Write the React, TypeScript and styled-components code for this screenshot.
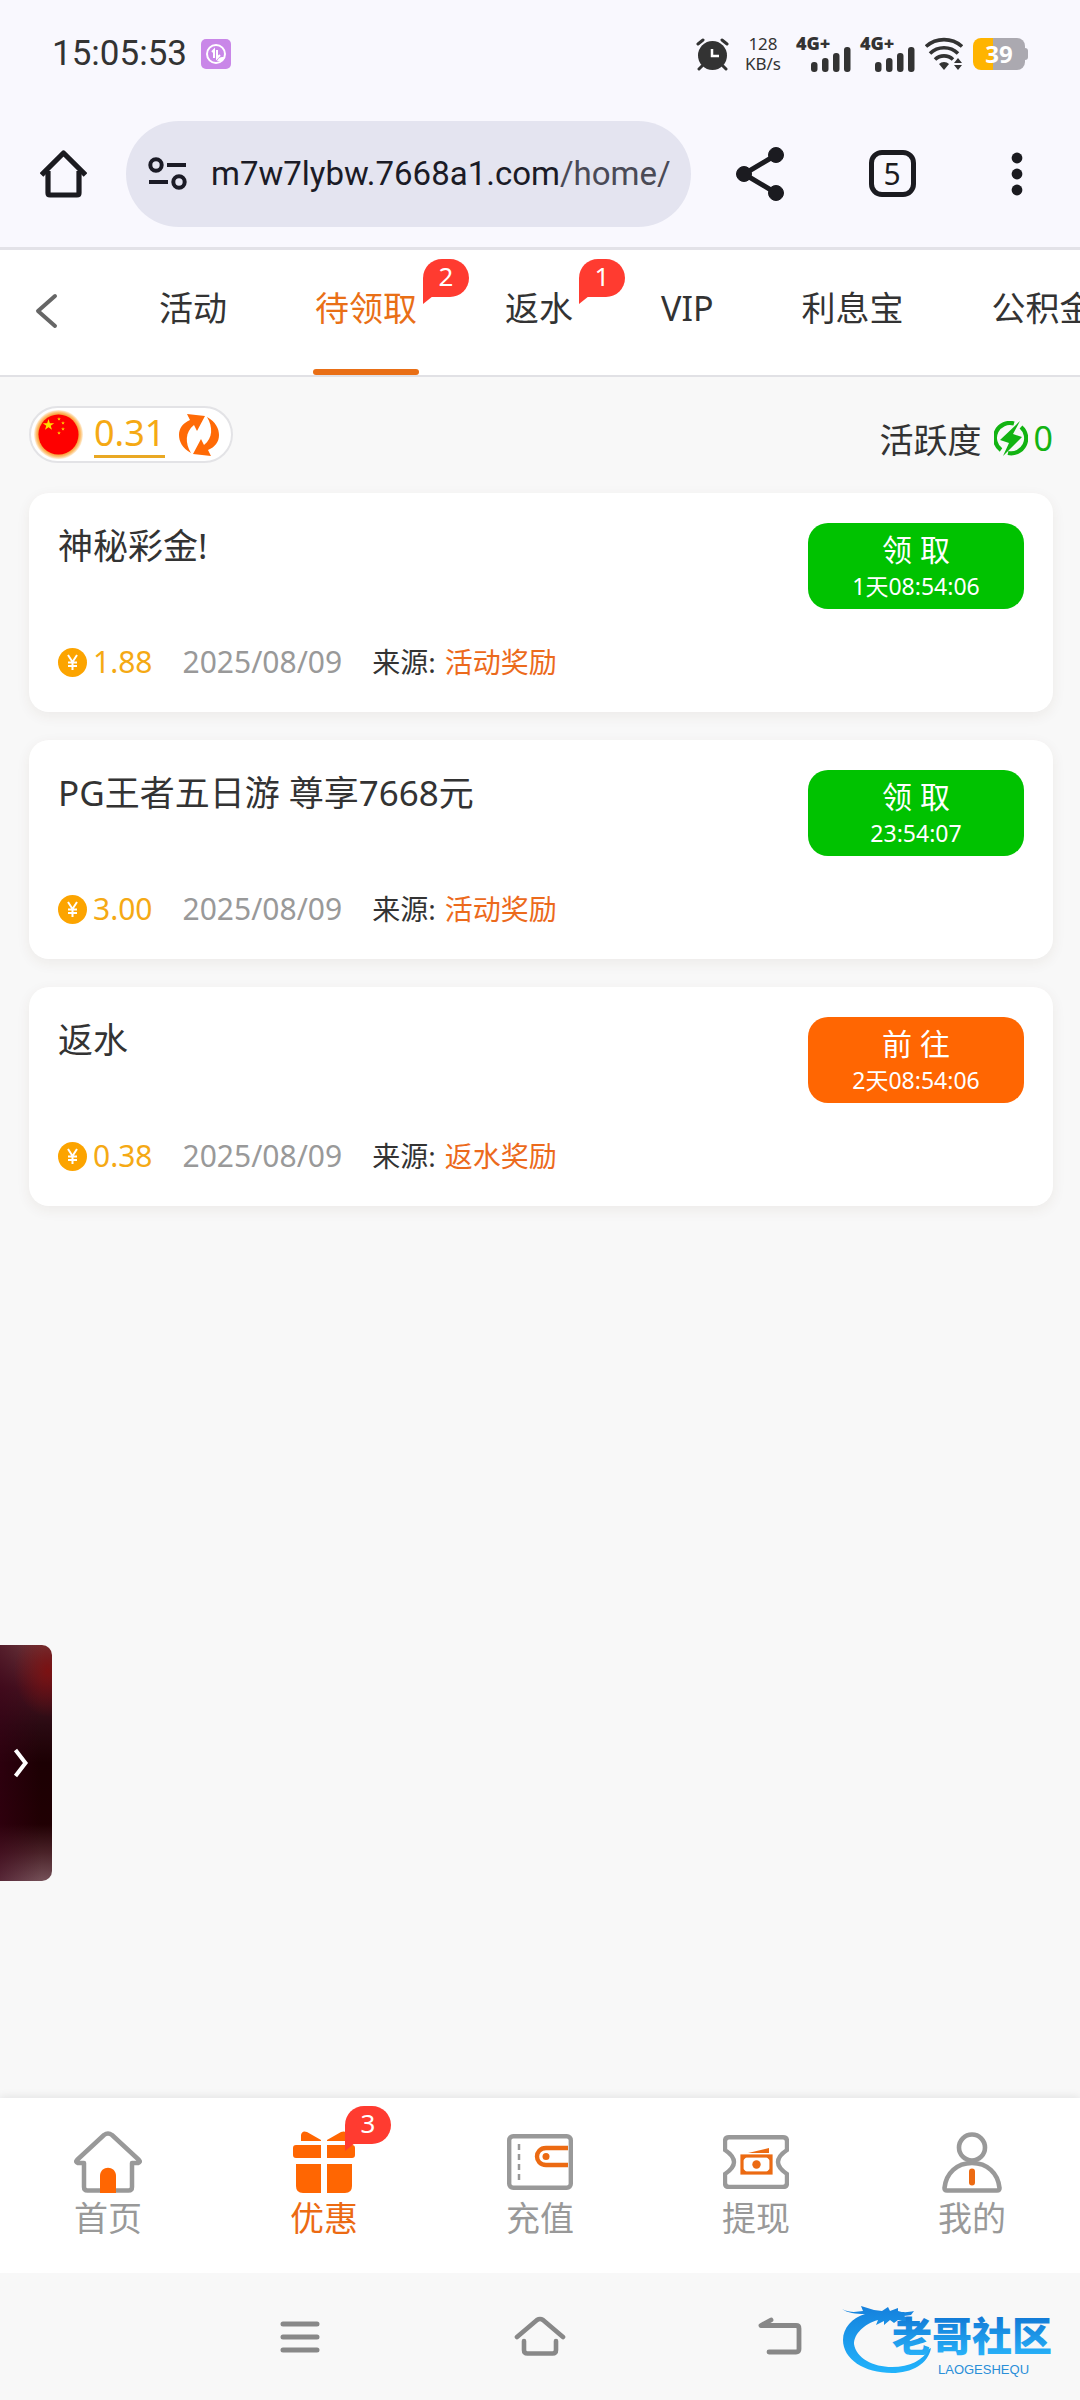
import React from "react";
import styled, { createGlobalStyle } from "styled-components";

const GlobalStyle = createGlobalStyle`
  *, *::before, *::after { box-sizing: border-box; }
  body {
    margin: 0;
    background: #f8f8f8;
    color: #333;
    font-family: "Noto Sans", "Noto Sans CJK SC", sans-serif;
  }
  button { margin: 0; padding: 0; border: 0; background: none; font: inherit; color: inherit; cursor: pointer; }
  a { color: inherit; text-decoration: none; }
  ul { margin: 0; padding: 0; list-style: none; }
  svg { display: block; flex: none; }
`;

const Screen = styled.div`
  display: flex;
  flex-direction: column;
  min-height: 100vh;
  overflow: hidden;
`;

/* ---------- device status bar ---------- */

const StatusBar = styled.div`
  display: flex;
  align-items: center;
  justify-content: space-between;
  height: 100px;
  padding: 8px 52px 0;
  background: #f9f8fe;
  color: #333;
`;

const StatusSide = styled.div`
  display: flex;
  align-items: center;
  gap: 10px;
`;

const Clock = styled.time`
  margin-right: 4px;
  font-family: Roboto, "Noto Sans", sans-serif;
  font-size: 35px;
  line-height: 40px;
`;

const NetSpeed = styled.div`
  display: flex;
  flex-direction: column;
  align-items: center;
  margin: 0 4px 0 6px;
  font-size: 17px;
  line-height: 20px;
`;

const SignalGroup = styled.div`
  display: flex;
  gap: 8px;
`;

const Battery = styled.div`
  display: flex;
  align-items: center;
`;

const BatteryBody = styled.div`
  display: flex;
  align-items: center;
  justify-content: center;
  width: 52px;
  height: 32px;
  border-radius: 8px;
  background: linear-gradient(90deg, #ffb400 39%, #aba9b0 39%);
  color: #fff;
  font-size: 24px;
  font-weight: 700;
  line-height: 32px;
`;

const BatteryTip = styled.div`
  width: 3px;
  height: 12px;
  border-radius: 0 3px 3px 0;
  background: #aba9b0;
`;

/* ---------- browser toolbar ---------- */

const Toolbar = styled.header`
  display: flex;
  align-items: center;
  height: 150px;
  padding: 0 4px 0 40px;
  border-bottom: 3px solid #e3e2e8;
  background: #f9f8fe;
  color: #1b1b20;
`;

const ToolButton = styled.button<{ $width: number }>`
  display: flex;
  align-items: center;
  justify-content: center;
  flex: none;
  width: ${(p) => p.$width}px;
  height: 106px;
`;

const AddressBar = styled.div`
  display: flex;
  align-items: center;
  flex: 1;
  min-width: 0;
  gap: 24px;
  height: 106px;
  margin: 0 3px 0 39px;
  padding: 0 21px 0 22px;
  border-radius: 53px;
  background: #e4e4f0;
`;

const Url = styled.span`
  overflow: hidden;
  color: #1b1b26;
  font-family: Roboto, "Noto Sans", sans-serif;
  font-size: 33px;
  line-height: 44px;
  white-space: nowrap;
`;

const UrlPath = styled.span`
  color: #4a4a56;
`;

const TabCount = styled.span`
  display: flex;
  align-items: center;
  justify-content: center;
  width: 47px;
  height: 47px;
  border: 5px solid #1b1b20;
  border-radius: 13px;
  font-size: 30px;
  line-height: 36px;
`;

/* ---------- category tabs ---------- */

const TabBar = styled.nav`
  display: flex;
  height: 127px;
  border-bottom: 2px solid #e1e1e5;
  background: #fff;
`;

const BackButton = styled.button`
  display: flex;
  align-items: center;
  flex: none;
  width: 159px;
  padding: 0 0 4px 35px;
`;

const TabList = styled.ul`
  display: flex;
  gap: 88px;
`;

const Tab = styled.a<{ $active?: boolean }>`
  position: relative;
  display: flex;
  align-items: center;
  height: 125px;
  padding-bottom: 10px;
  color: ${(p) => (p.$active ? "#e96f16" : "#333")};
  font-size: 34px;
  line-height: 48px;
  white-space: nowrap;

  &::after {
    content: "";
    position: absolute;
    right: -2px;
    bottom: 0;
    left: -2px;
    height: 6px;
    border-radius: 3px;
    background: ${(p) => (p.$active ? "#e96f16" : "transparent")};
  }
`;

const Badge = styled.span<{ $left: string; $top: number }>`
  position: absolute;
  top: ${(p) => p.$top}px;
  left: ${(p) => p.$left};
  width: 46px;
  height: 38px;
  border-radius: 19px 19px 19px 0;
  background: #ff3b30;
  color: #fff;
  font-size: 26px;
  line-height: 34px;
  text-align: center;

  &::after {
    content: "";
    position: absolute;
    top: 37px;
    left: 0;
    border-top: 8px solid #ff3b30;
    border-right: 10px solid transparent;
  }
`;

/* ---------- content ---------- */

const Content = styled.main`
  position: relative;
  flex: 1;
  padding: 29px 27px 29px 29px;
`;

const SummaryRow = styled.div`
  display: flex;
  align-items: flex-end;
  justify-content: space-between;
  margin-bottom: 30px;
`;

const BalancePill = styled.div`
  display: flex;
  align-items: center;
  height: 57px;
  padding: 0 12px 0 3px;
  border: 2px solid #e3e3e6;
  border-radius: 29px;
  background: #fff;
`;

const Balance = styled.span`
  margin: 0 14px 0 11px;
  border-bottom: 3px solid #e9a823;
  color: #f5a914;
  font-size: 36px;
  line-height: 44px;
`;

const Activity = styled.div`
  display: flex;
  align-items: center;
  font-size: 34px;
  line-height: 46px;
`;

const ActivityValue = styled.span`
  display: flex;
  align-items: center;
  gap: 6px;
  height: 46px;
  margin-left: 12px;
  padding-bottom: 4px;
  color: #12b312;
`;

const RewardList = styled.ul`
  display: flex;
  flex-direction: column;
  gap: 28px;
`;

const Card = styled.li`
  display: flex;
  flex-direction: column;
  gap: 33px;
  padding: 30px 29px;
  border-radius: 20px;
  background: #fff;
  box-shadow: 0 4px 14px rgba(90, 60, 30, 0.07);
`;

const CardHead = styled.div`
  display: flex;
  align-items: flex-start;
  justify-content: space-between;
`;

const CardTitle = styled.h2`
  margin: 0;
  font-size: 35px;
  font-weight: 400;
  line-height: 46px;
`;

const ClaimButton = styled.button<{ $tone: string }>`
  display: flex;
  flex-direction: column;
  align-items: center;
  justify-content: center;
  width: 216px;
  height: 86px;
  padding-top: 2px;
  border-radius: 20px;
  background: ${(p) => p.$tone};
  color: #fff;
`;

const ClaimLabel = styled.span`
  font-size: 30px;
  line-height: 38px;
`;

const Countdown = styled.span`
  font-size: 23px;
  line-height: 34px;
`;

const CardMeta = styled.div`
  display: flex;
  align-items: center;
  gap: 30px;
  font-size: 30px;
  line-height: 40px;
`;

const Amount = styled.span`
  display: flex;
  align-items: center;
  gap: 6px;
  color: #f5a914;
`;

const DateText = styled.time`
  color: #999;
`;

const Source = styled.span`
  display: flex;
  gap: 9px;
  font-size: 28px;
`;

const SourceLink = styled.a`
  color: #ec6a1c;
`;

const SideHandle = styled.button`
  position: absolute;
  top: 1268px;
  left: 0;
  display: flex;
  align-items: center;
  width: 52px;
  height: 236px;
  padding-left: 13px;
  border-radius: 0 10px 10px 0;
  background:
    radial-gradient(ellipse 34px 46px at 48px 26px, rgba(130, 14, 14, 0.85), transparent),
    linear-gradient(90deg, rgba(60, 0, 24, 0.5), transparent 80%),
    linear-gradient(180deg, #6e3b3e 0, #451420 18%, #2a0a12 34%, #1c0003 50%, #200003 76%, #4a2228 88%, #745058 100%);
`;

/* ---------- bottom navigation ---------- */

const BottomNav = styled.nav`
  display: grid;
  grid-template-columns: repeat(5, 1fr);
  height: 175px;
  background: #fff;
  box-shadow: 0 -2px 8px rgba(0, 0, 0, 0.08);
`;

const NavItem = styled.a<{ $active?: boolean }>`
  display: flex;
  flex-direction: column;
  align-items: center;
  padding-top: 32px;
  color: ${(p) => (p.$active ? "#ec6a12" : "#999")};
  font-size: 34px;
  line-height: 48px;
`;

const NavIcon = styled.span`
  position: relative;
  display: flex;
  align-items: center;
  justify-content: center;
  height: 64px;
`;

const SystemNav = styled.div`
  position: relative;
  display: grid;
  grid-template-columns: repeat(3, 240px);
  justify-content: center;
  height: 127px;
  background: #f8f8f8;
`;

const SystemButton = styled.button`
  display: flex;
  align-items: center;
  justify-content: center;
  height: 127px;
`;

const Watermark = styled.div`
  position: absolute;
  right: 12px;
  bottom: 20px;
`;

/* ---------- drawings ---------- */

const NoteIcon = () => (
  <svg width="30" height="30" viewBox="0 0 30 30" fill="none">
    <rect width="30" height="30" rx="5" fill="#c987e8" />
    <circle cx="15" cy="15" r="9" stroke="#fff" strokeWidth="2" />
    <path d="M11 13l2-2v8M16 11v8l3-3" stroke="#fff" strokeWidth="2" />
    <path d="M16 22c2-4 4-4 7-4-1 4-3 5-7 4z" fill="#fff" />
  </svg>
);

const AlarmIcon = () => (
  <svg width="33" height="34" viewBox="0 0 33 34" fill="none" stroke="#333" strokeLinecap="round">
    <circle cx="16.500" cy="18.500" r="14.500" fill="#333" stroke="none" />
    <path d="M2 7l5-4M31 7l-5-4" strokeWidth="3" />
    <path d="M6 29l-3 3M27 29l3 3" strokeWidth="3" />
    <path d="M16 12v7h7" stroke="#fff" strokeWidth="2.500" strokeLinecap="butt" />
  </svg>
);

const SignalIcon = () => (
  <svg width="56" height="50" viewBox="0 0 56 50" fill="#333">
    <text x="1" y="21" fontFamily="Noto Sans, sans-serif" fontSize="18" fontWeight="900">4G+</text>
    <rect x="16" y="33" width="6.500" height="10" rx="3" />
    <rect x="27" y="29" width="6.500" height="14" rx="3" />
    <rect x="38" y="24" width="6.500" height="19" rx="3" />
    <rect x="49" y="18" width="6.500" height="25" rx="3" />
  </svg>
);

const WifiIcon = () => (
  <svg width="38" height="34" viewBox="0 0 38 34" fill="none" stroke="#333" strokeWidth="3.600">
    <path d="M1 9.500a27 27 0 0 1 36 0" />
    <path d="M5 16.500a20 20 0 0 1 28 0" />
    <path d="M10 22.500a13 13 0 0 1 18 0" />
    <path d="M14 27a7 7 0 0 1 10 0l-5 6z" fill="#333" stroke="none" />
    <path d="M29 26l4-5 4 5zM29 28l4 5 4-5z" fill="#333" stroke="none" />
  </svg>
);

const BrowserHomeIcon = () => (
  <svg width="47" height="48" viewBox="0 0 47 48" fill="none" stroke="#1b1b20" strokeWidth="5.200" strokeLinejoin="round">
    <path d="M1.500 25L23.500 3l22 22" />
    <path d="M8 21v22q0 2 2 2h27q2 0 2-2V21" />
  </svg>
);

const SiteInfoIcon = () => (
  <svg width="39" height="34" viewBox="0 0 39 34" fill="none" stroke="#1b1b26" strokeWidth="4">
    <circle cx="8" cy="8" r="5.700" />
    <path d="M19 8h19M1 25h19" />
    <circle cx="31" cy="25" r="5.700" />
  </svg>
);

const ShareIcon = () => (
  <svg width="48" height="54" viewBox="0 0 48 54" fill="#1b1b20" stroke="#1b1b20">
    <path d="M40 8L8 27l32 19" fill="none" strokeWidth="5" />
    <circle cx="40" cy="8" r="7.500" />
    <circle cx="8" cy="27" r="7.500" />
    <circle cx="40" cy="46" r="7.500" />
  </svg>
);

const MoreIcon = () => (
  <svg width="12" height="44" viewBox="0 0 12 44" fill="#1b1b20">
    <circle cx="6" cy="6" r="5.400" />
    <circle cx="6" cy="22" r="5.400" />
    <circle cx="6" cy="38" r="5.400" />
  </svg>
);

const BackIcon = () => (
  <svg width="24" height="36" viewBox="0 0 24 36" fill="none" stroke="#666" strokeWidth="4" strokeLinecap="round" strokeLinejoin="round">
    <path d="M20 3L3 18l17 15" />
  </svg>
);

const STAR = "M0-1 L.2245-.309 .951-.309 .363.118 .588.809 0 .382-.588.809-.363.118-.951-.309-.2245-.309z";

const FlagIcon = () => (
  <svg width="49" height="49" viewBox="0 0 49 49">
    <defs>
      <radialGradient id="halo">
        <stop offset="0.800" stopColor="#f7962c" />
        <stop offset="0.900" stopColor="#fdbf70" />
        <stop offset="1" stopColor="#fff1dc" />
      </radialGradient>
    </defs>
    <circle cx="24.500" cy="24.500" r="24.500" fill="url(#halo)" />
    <circle cx="24.500" cy="24.500" r="20" fill="#fe0000" />
    <g fill="#ffde00">
      <path d={STAR} transform="translate(14.500 15) scale(6)" />
      <path d={STAR} transform="translate(25 9) scale(2)" />
      <path d={STAR} transform="translate(29 13) scale(2)" />
      <path d={STAR} transform="translate(29 19) scale(2)" />
      <path d={STAR} transform="translate(25 23) scale(2)" />
    </g>
  </svg>
);

const RefreshIcon = () => (
  <svg width="40" height="42" viewBox="0 0 40 42" fill="#ff6a06">
    <path d="M8 0l18 2-8 15-3-6C6 18 6 29 12 39 3 34 0 27 0 21 0 14 4 9 11 6z" />
    <path d="M32 42l-18-2 8-15 3 6C34 24 34 13 28 3c9 5 12 12 12 18 0 7-4 12-11 15z" />
  </svg>
);

const EnergyIcon = () => (
  <svg width="34" height="35" viewBox="0 0 34 35" fill="none">
    <path d="M20 2.500A15 15 0 0 0 7 29M27 6a15 15 0 0 1-13 26" stroke="#12b312" strokeWidth="4.200" />
    <path d="M26 0L6 19l9 3-6 13 19-19-9-3z" fill="#12b312" />
  </svg>
);

const CoinIcon = () => (
  <svg width="29" height="29" viewBox="0 0 29 29" fill="none">
    <circle cx="14.500" cy="14.500" r="14.500" fill="#fca400" />
    <path d="M10 7l4.500 7L19 7M14.500 14v8M10 14.500h9M10 18h9" stroke="#fff" strokeWidth="2" />
  </svg>
);

const HandleIcon = () => (
  <svg width="16" height="30" viewBox="0 0 16 30" fill="none" stroke="#fff" strokeWidth="4">
    <path d="M2.500 2L12.500 15l-10 13" />
  </svg>
);

const HomeIcon = () => (
  <svg width="68" height="62" viewBox="0 0 68 62" fill="none">
    <path
      d="M10 32H4q-3-1-1-3L30 4q4-3 8 0l27 25q2 2-1 3h-6v24q0 3.500-3.500 3.500h-41Q10 59.500 10 56z"
      stroke="#999" strokeWidth="4.500" strokeLinejoin="round"
    />
    <path d="M26 62V45c0-11 16-11 16 0v17z" fill="#ff6602" />
  </svg>
);

const GiftIcon = () => (
  <svg width="62" height="62" viewBox="0 0 62 62" fill="#ff6602">
    <path d="M8 10V4q1-5 6-3l14 8v1zM54 10V4q-1-5-6-3L34 9v1z" />
    <path d="M3 14h25v13H3q-3 0-3-3v-7q0-3 3-3zM34 14h25q3 0 3 3v7q0 3-3 3H34z" />
    <path d="M3 33h25v29H10q-7 0-7-7zM34 33h25v22q0 7-7 7H34z" />
  </svg>
);

const WalletIcon = () => (
  <svg width="66" height="56" viewBox="0 0 66 56" fill="none">
    <rect x="2.200" y="2.200" width="61.600" height="51.600" rx="4" stroke="#999" strokeWidth="4.400" />
    <path d="M12 10v37" stroke="#999" strokeWidth="2.500" strokeDasharray="6 4" />
    <path d="M61 14H39c-12 0-12 17 0 17h22" stroke="#ec6a12" strokeWidth="4.400" />
    <circle cx="39" cy="22.500" r="3.500" fill="#ec6a12" />
  </svg>
);

const TicketIcon = () => (
  <svg width="66" height="54" viewBox="0 0 66 54" fill="none">
    <path
      d="M6 2.200h54q4 0 4 4V15c-12 8-12 16 0 24v9q0 4-4 4H6q-4 0-4-4v-9c12-8 12-16 0-24V6.200q0-4 4-4z"
      stroke="#999" strokeWidth="4.400"
    />
    <path d="M25 18l21-5v5z" fill="#ec6a12" />
    <rect x="19" y="21" width="29" height="17" stroke="#ec6a12" strokeWidth="3.200" />
    <circle cx="33.500" cy="29.500" r="4.200" fill="#ec6a12" />
    <path d="M19 25l4-4M48 25l-4-4M19 34l4 4M48 34l-4 4" stroke="#ec6a12" strokeWidth="2" />
  </svg>
);

const PersonIcon = () => (
  <svg width="60" height="61" viewBox="0 0 60 61" fill="none" stroke="#999" strokeWidth="4.600">
    <circle cx="30" cy="15.500" r="13" />
    <path d="M30 31C15 31 4 41 2.500 56q0 2.500 2.500 2.500h50q2.500 0 2.500-2.500C56 41 45 31 30 31z" strokeLinejoin="round" />
    <path d="M30 39.500v11" stroke="#ec6a12" strokeWidth="6" strokeLinecap="round" />
  </svg>
);

const RecentsIcon = () => (
  <svg width="40" height="34" viewBox="0 0 40 34" stroke="#888" strokeWidth="5" strokeLinecap="round">
    <path d="M3 4h34M3 17h34M3 30h34" />
  </svg>
);

const SystemHomeIcon = () => (
  <svg width="52" height="46" viewBox="0 0 52 46" fill="none" stroke="#888" strokeWidth="4.600" strokeLinecap="round" strokeLinejoin="round">
    <path d="M3 23L23 6q3-2 6 0l20 17" />
    <path d="M10 27v9q0 3.500 3.500 3.500h25q3.500 0 3.500-3.500v-9" />
  </svg>
);

const SystemBackIcon = () => (
  <svg width="44" height="40" viewBox="0 0 44 40" fill="none" stroke="#888" strokeWidth="4.800" strokeLinecap="round" strokeLinejoin="round">
    <path d="M13 3L3 8.500h35q3 0 3 3V32q0 3-3 3H11" />
  </svg>
);

const CommunityLogo = () => (
  <svg width="230" height="80" viewBox="0 0 230 80">
    <defs>
      <linearGradient id="ring" x1="0" y1="0" x2="0" y2="1">
        <stop offset="0" stopColor="#1580dc" />
        <stop offset="1" stopColor="#22b4fc" />
      </linearGradient>
      <linearGradient id="word" x1="0" y1="0" x2="0" y2="1">
        <stop offset="0.200" stopColor="#127ad6" />
        <stop offset="1" stopColor="#2cbcff" />
      </linearGradient>
    </defs>
    <path
      fill="url(#ring)"
      d="M4 9C12 13 18 12 25 11L23 6 36 10 44 11 50 7 52 11 60 8 60 11C66 13 71 12 76 11L73 15 66 16 74 20 72 23 60 20 56 23 52 20 46 25 46 21 38 25 40 20C26 24 16 34 16 44 18 58 35 67 54 67 72 67 85 60 91 49L93 48C90 64 74 73 54 73 26 73 5 59 5 40 5 28 14 18 27 14 18 14 9 13 4 9Z"
    />
    <text x="54" y="51" fill="url(#word)" fontFamily="Noto Sans CJK SC, sans-serif" fontSize="40" fontWeight="900">老哥社区</text>
    <text x="100" y="74" fill="#2a8fd8" fontFamily="Liberation Sans, sans-serif" fontSize="13">LAOGESHEQU</text>
  </svg>
);

/* ---------- data ---------- */

const tabs = [
  { label: "活动" },
  { label: "待领取", badge: 2, active: true },
  { label: "返水", badge: 1 },
  { label: "VIP" },
  { label: "利息宝" },
  { label: "公积金" },
];

const GREEN = "#00c200";
const ORANGE = "#ff6602";

const rewards = [
  { title: "神秘彩金!", amount: "1.88", source: "活动奖励", action: "领 取", left: "1天08:54:06", tone: GREEN },
  { title: "PG王者五日游 尊享7668元", amount: "3.00", source: "活动奖励", action: "领 取", left: "23:54:07", tone: GREEN },
  { title: "返水", amount: "0.38", source: "返水奖励", action: "前 往", left: "2天08:54:06", tone: ORANGE },
];

const navItems = [
  { label: "首页", Icon: HomeIcon },
  { label: "优惠", Icon: GiftIcon, badge: 3, active: true },
  { label: "充值", Icon: WalletIcon },
  { label: "提现", Icon: TicketIcon },
  { label: "我的", Icon: PersonIcon },
];

export default function App() {
  return (
    <Screen>
      <GlobalStyle />

      <StatusBar>
        <StatusSide>
          <Clock>15:05:53</Clock>
          <NoteIcon />
        </StatusSide>
        <StatusSide>
          <AlarmIcon />
          <NetSpeed>
            <span>128</span>
            <span>KB/s</span>
          </NetSpeed>
          <SignalGroup>
            <SignalIcon />
            <SignalIcon />
          </SignalGroup>
          <WifiIcon />
          <Battery>
            <BatteryBody>39</BatteryBody>
            <BatteryTip />
          </Battery>
        </StatusSide>
      </StatusBar>

      <Toolbar>
        <ToolButton $width={47} aria-label="主页"><BrowserHomeIcon /></ToolButton>
        <AddressBar>
          <SiteInfoIcon />
          <Url>m7w7lybw.7668a1.com<UrlPath>/home/</UrlPath></Url>
        </AddressBar>
        <ToolButton $width={132} aria-label="分享"><ShareIcon /></ToolButton>
        <ToolButton $width={132} aria-label="标签页"><TabCount>5</TabCount></ToolButton>
        <ToolButton $width={118} aria-label="更多"><MoreIcon /></ToolButton>
      </Toolbar>

      <TabBar>
        <BackButton aria-label="返回"><BackIcon /></BackButton>
        <TabList>
          {tabs.map((t) => (
            <li key={t.label}>
              <Tab href="#" $active={t.active}>
                {t.label}
                {t.badge && <Badge $left="calc(100% + 6px)" $top={9}>{t.badge}</Badge>}
              </Tab>
            </li>
          ))}
        </TabList>
      </TabBar>

      <Content>
        <SummaryRow>
          <BalancePill>
            <FlagIcon />
            <Balance>0.31</Balance>
            <button aria-label="刷新"><RefreshIcon /></button>
          </BalancePill>
          <Activity>
            活跃度
            <ActivityValue><EnergyIcon />0</ActivityValue>
          </Activity>
        </SummaryRow>

        <RewardList>
          {rewards.map((r) => (
            <Card key={r.title}>
              <CardHead>
                <CardTitle>{r.title}</CardTitle>
                <ClaimButton $tone={r.tone}>
                  <ClaimLabel>{r.action}</ClaimLabel>
                  <Countdown>{r.left}</Countdown>
                </ClaimButton>
              </CardHead>
              <CardMeta>
                <Amount><CoinIcon />{r.amount}</Amount>
                <DateText>2025/08/09</DateText>
                <Source>来源:<SourceLink href="#">{r.source}</SourceLink></Source>
              </CardMeta>
            </Card>
          ))}
        </RewardList>

        <SideHandle aria-label="展开"><HandleIcon /></SideHandle>
      </Content>

      <BottomNav>
        {navItems.map(({ label, Icon, badge, active }) => (
          <NavItem key={label} href="#" $active={active}>
            <NavIcon>
              <Icon />
              {badge && <Badge $left="52px" $top={-24}>{badge}</Badge>}
            </NavIcon>
            {label}
          </NavItem>
        ))}
      </BottomNav>

      <SystemNav>
        <SystemButton aria-label="最近任务"><RecentsIcon /></SystemButton>
        <SystemButton aria-label="桌面"><SystemHomeIcon /></SystemButton>
        <SystemButton aria-label="返回上一页"><SystemBackIcon /></SystemButton>
        <Watermark><CommunityLogo /></Watermark>
      </SystemNav>
    </Screen>
  );
}
